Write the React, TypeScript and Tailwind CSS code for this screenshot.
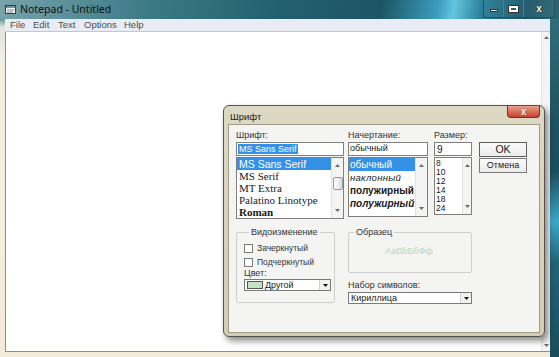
import React from "react";

function UpArrow() {
  return (
    <svg width="5" height="3" viewBox="0 0 5 3" className="block">
      <path d="M0 3 L2.5 0 L5 3 Z" fill="#6a6a6a" />
    </svg>
  );
}
function DownArrow({ color = "#6a6a6a" }: { color?: string }) {
  return (
    <svg width="5" height="3" viewBox="0 0 5 3" className="block">
      <path d="M0 0 L5 0 L2.5 3 Z" fill={color} />
    </svg>
  );
}

function ListScroll({ thumb }: { thumb?: boolean }) {
  return (
    <div className="w-[12px] h-full bg-[#f3f3f3] border-l border-[#e2e2e2] flex flex-col items-center justify-between py-[6px]">
      <UpArrow />
      {thumb ? (
        <div className="w-[10px] h-[13px] -mt-[10px] border border-[#9a9a9a] rounded-[2px] bg-[linear-gradient(90deg,#ffffff,#dcdcdc)]" />
      ) : null}
      <DownArrow />
    </div>
  );
}

function Combo({ children, w }: { children: React.ReactNode; w: string }) {
  return (
    <div className={`${w} h-[12px] flex items-stretch border border-[#7a7a7a] bg-white`}>
      <div className="flex-1 flex items-center overflow-hidden">{children}</div>
      <div className="w-[11px] flex items-center justify-center bg-[#f1f1f1] border-l border-[#d0d0d0]">
        <DownArrow color="#111" />
      </div>
    </div>
  );
}

export default function App() {
  return (
    <div className="relative w-[559px] h-[357px] overflow-hidden bg-[#f1ecdd] font-['Liberation_Sans',Arial,sans-serif] text-[#1a1a1a]">
      {/* Notepad title bar */}
      <div className="h-[19px] flex items-center bg-[linear-gradient(100deg,#78a3aa_0%,#3f7c89_25%,#23606f_50%,#1c5565_68%,#3a9cbc_78%,#63c5e0_81%,#2a7f99_86%,#1b5567_94%,#2b6676_100%)]">
        <svg width="11" height="9" viewBox="0 0 11 9" className="ml-[5px]">
          <rect x="0.5" y="0.5" width="10" height="8" fill="#f4f4f4" stroke="#3a3a3a" />
          <rect x="1" y="1" width="9" height="2" fill="#6d8fb0" />
          <path d="M2 5 H9 M2 7 H8" stroke="#8a8a8a" />
        </svg>
        <span className="ml-[4px] text-[10.5px] font-['Noto_Sans',sans-serif] text-[#101010] leading-none">Notepad - Untitled</span>
        <div className="ml-auto mr-[4px] self-start flex h-[18px] border border-t-0 border-[#2a4f59] rounded-b-[3px] overflow-hidden">
          <div className="w-[20px] flex items-center justify-center border-r border-[#4f818d] bg-[rgba(255,255,255,0.04)]">
            <div className="w-[8px] h-[3px] bg-white border border-[#333] mt-[3px]" />
          </div>
          <div className="w-[20px] flex items-center justify-center border-r border-[#4f818d] bg-[rgba(255,255,255,0.04)]">
            <div className="w-[9px] h-[6px] border-2 border-white outline outline-1 outline-[#333]" />
          </div>
          <div className="w-[30px] flex items-center justify-center bg-[rgba(255,255,255,0.05)]">
            <span className="text-white font-bold text-[10px] leading-none [text-shadow:0_0_1px_#000,0_0_1px_#000]">x</span>
          </div>
        </div>
      </div>

      <div className="flex h-[338px]">
        {/* left frame */}
        <div className="w-[5px] bg-[linear-gradient(180deg,#5f95a0_0px,#dfe5df_8px,#f4efe2_40px,#f3ecd9_100%)]" />
        {/* center */}
        <div className="w-[545px] flex flex-col">
          {/* menu bar */}
          <div className="h-[13px] flex items-center bg-[#e9ecf5] border-b border-[#c3c7d3] text-[9.5px] font-['Liberation_Sans',sans-serif] text-[#4b4b4b] leading-none">
            <span className="ml-[5px] w-[23px]">File</span>
            <span className="w-[25px]">Edit</span>
            <span className="w-[26px]">Text</span>
            <span className="w-[40px]">Options</span>
            <span>Help</span>
          </div>
          {/* edit area */}
          <div className="h-[320px] flex bg-white border-l border-b border-[#8d8d8d]">
            <div className="flex-1" />
            <div className="w-[9px] border-l border-[#e6e6e6] bg-[#f4f4f4] flex flex-col items-center justify-between py-[4px]">
              <UpArrow />
              <DownArrow />
            </div>
          </div>
          <div className="flex-1 bg-[#f3ecd8]" />
        </div>
        {/* right frame */}
        <div className="w-[9px] bg-[linear-gradient(180deg,#2f6d7b_0%,#1f5361_30%,#1b4e5c_45%,#3aa8c6_60%,#216478_72%,#1a4d5b_100%)]" />
      </div>

      {/* Font dialog */}
      <div className="absolute left-[223px] top-[105px] w-[322px] h-[232px] flex flex-col rounded-[6px] border border-[#55524a] bg-[linear-gradient(180deg,#ddd8c4,#d2ccb4)] shadow-[3px_4px_6px_rgba(0,0,0,0.45)]">
        <div className="h-[18px] flex items-center relative">
          <span className="ml-[6px] mt-[3px] text-[9.5px] font-['Liberation_Sans',sans-serif] text-[#222] leading-none">Шрифт</span>
          <div className="absolute right-[4px] top-0 w-[33px] h-[12px] rounded-b-[4px] border border-t-0 border-[#7b2f22] bg-[linear-gradient(180deg,#eaa08f,#c9412c)] flex items-center justify-center">
            <span className="text-white font-bold text-[10px] leading-none [text-shadow:0_0_1px_#5a1a10]">x</span>
          </div>
        </div>
        <div className="mx-[4px] mb-[3px] flex-1 border border-[#a09b86] bg-[#f4f4f3] pl-[7px] pt-[5px] text-[9px]">
          {/* top row */}
          <div className="flex items-start">
            {/* font column */}
            <div className="w-[108px] flex flex-col">
              <div className="h-[11px] leading-[11px] text-[#333]">Шрифт:</div>
              <div className="mt-[1px] h-[14px] border border-[#7f7f7f] bg-white flex items-center pl-[1px]">
                <span className="bg-[#3591e8] text-white text-[9px] leading-[10px] px-[1px]">MS Sans Serif</span>
              </div>
              <div className="mt-[1px] h-[62px] border border-[#7f7f7f] bg-white flex">
                <div className="flex-1 flex flex-col">
                  <div className="h-[12px] bg-[#3591e8] text-white text-[10.5px] leading-[12px] pl-[2px]">MS Sans Serif</div>
                  <div className="h-[12px] text-[11px] leading-[12px] pl-[2px] font-['Liberation_Serif',serif]">MS Serif</div>
                  <div className="h-[12px] text-[11px] leading-[12px] pl-[2px] font-['Liberation_Serif',serif]">MT Extra</div>
                  <div className="h-[13px] text-[11px] leading-[13px] pl-[2px] font-['Liberation_Serif',serif]">Palatino Linotype</div>
                  <div className="h-[11px] text-[11px] leading-[11px] pl-[2px] font-['Liberation_Serif',serif] font-bold">Roman</div>
                </div>
                <ListScroll thumb />
              </div>
            </div>
            {/* style column */}
            <div className="ml-[4px] w-[80px] flex flex-col">
              <div className="h-[11px] leading-[11px] text-[#333]">Начертание:</div>
              <div className="mt-[1px] h-[14px] border border-[#7f7f7f] bg-white flex items-center pl-[1px] text-[9px]">обычный</div>
              <div className="mt-[1px] h-[60px] border border-[#7f7f7f] bg-white flex">
                <div className="flex-1 flex flex-col overflow-hidden">
                  <div className="h-[13px] bg-[#3591e8] text-white text-[10px] leading-[13px] pl-[1px]">обычный</div>
                  <div className="h-[13px] italic text-[9.5px] leading-[13px] pl-[1px] whitespace-nowrap tracking-[0.3px]">наклонный</div>
                  <div className="h-[13px] font-bold text-[10px] leading-[13px] pl-[1px] whitespace-nowrap">полужирный</div>
                  <div className="h-[13px] font-bold italic text-[10px] leading-[13px] pl-[1px] whitespace-nowrap">полужирный</div>
                </div>
                <ListScroll />
              </div>
            </div>
            {/* size column */}
            <div className="ml-[6px] w-[38px] flex flex-col">
              <div className="h-[11px] leading-[11px] text-[#333]">Размер:</div>
              <div className="mt-[1px] h-[14px] border border-[#7f7f7f] bg-white flex items-center pl-[2px] text-[10px]">9</div>
              <div className="mt-[1px] h-[58px] border border-[#7f7f7f] bg-white flex">
                <div className="flex-1 flex flex-col pt-[1px] text-[8.5px] pl-[1px]">
                  <div className="h-[9px] leading-[9px]">8</div>
                  <div className="h-[9px] leading-[9px]">10</div>
                  <div className="h-[9px] leading-[9px]">12</div>
                  <div className="h-[9px] leading-[9px]">14</div>
                  <div className="h-[9px] leading-[9px]">18</div>
                  <div className="h-[9px] leading-[9px]">24</div>
                </div>
                <div className="w-[9px] h-full bg-[#f3f3f3] border-l border-[#e2e2e2] flex flex-col items-center justify-between py-[6px]">
                  <UpArrow />
                  <DownArrow />
                </div>
              </div>
            </div>
            {/* buttons */}
            <div className="ml-[7px] w-[48px] flex flex-col pt-[12px]">
              <div className="h-[15px] border border-[#5f5f5f] bg-[linear-gradient(180deg,#fafafa,#ececec)] flex items-center justify-center text-[10.5px] leading-none">OK</div>
              <div className="mt-[1px] h-[15px] border border-[#7a7a7a] bg-[linear-gradient(180deg,#fafafa,#ececec)] flex items-center justify-center text-[9px] leading-none">Отмена</div>
            </div>
          </div>

          {/* bottom row */}
          <div className="mt-[8px] flex items-start">
            <fieldset className="w-[99px] h-[76px] border border-[#cfcfcf] rounded-[2px] pl-[7px]">
              <legend className="ml-[5px] px-[2px] text-[9px] leading-[11px] text-[#333]">Видоизменение</legend>
              <div className="mt-[4px] h-[12px] flex items-center">
                <div className="w-[9px] h-[9px] border border-[#7a7a7a] bg-white" />
                <span className="ml-[4px] text-[8.5px] text-[#333]">Зачеркнутый</span>
              </div>
              <div className="mt-[2px] h-[12px] flex items-center">
                <div className="w-[9px] h-[9px] border border-[#7a7a7a] bg-white" />
                <span className="ml-[4px] text-[8.5px] text-[#333]">Подчеркнутый</span>
              </div>
              <div className="h-[10px] leading-[10px] text-[#333]">Цвет:</div>
              <div className="mt-[1px]">
                <Combo w="w-[87px]">
                  <div className="ml-[2px] w-[16px] h-[8px] border border-[#555] bg-[#c4e2c4]" />
                  <span className="ml-[2px] text-[9px] leading-none">Другой</span>
                </Combo>
              </div>
            </fieldset>
            <div className="ml-[13px] w-[124px] flex flex-col">
              <fieldset className="h-[46px] border border-[#cfcfcf] rounded-[2px]">
                <legend className="ml-[5px] px-[2px] text-[9px] leading-[11px] text-[#333]">Образец</legend>
                <div className="h-[28px] flex items-center justify-center pr-[2px] text-[9px] text-[#b7d9b7]">АаBbБбФф</div>
              </fieldset>
              <div className="mt-[7px] h-[11px] leading-[11px] text-[#333]">Набор символов:</div>
              <div className="mt-[1px]">
                <Combo w="w-[124px]">
                  <span className="ml-[2px] text-[9px] leading-none">Кириллица</span>
                </Combo>
              </div>
            </div>
          </div>
        </div>
      </div>
    </div>
  );
}
